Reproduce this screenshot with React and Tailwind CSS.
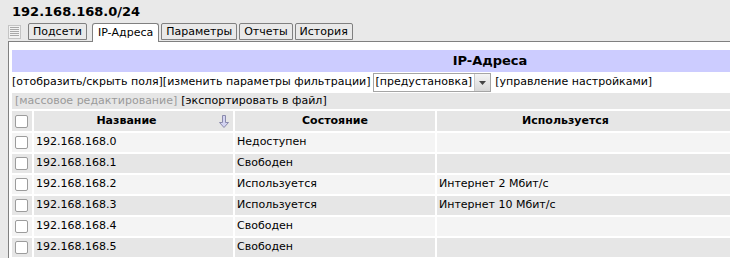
import React from 'react'

const rows = [
    ['192.168.168.0', 'Недоступен', ''],
    ['192.168.168.1', 'Свободен', ''],
    ['192.168.168.2', 'Используется', 'Интернет 2 Мбит/с'],
    ['192.168.168.3', 'Используется', 'Интернет 10 Мбит/с'],
    ['192.168.168.4', 'Свободен', ''],
    ['192.168.168.5', 'Свободен', ''],
]

function Tab({ label, active }) {
    if (active) {
        return (
            <div className="relative z-10 -mb-px h-[19px] px-[5px] bg-white border border-b-0 border-[#808080] rounded-t-[3px] leading-[17px]">
                {label}
            </div>
        )
    }
    return (
        <div className="mb-px h-[17px] px-[4px] bg-[#e9e9e9] border border-[#808080] rounded-t-[2px] leading-[15px]">
            {label}
        </div>
    )
}

function Checkbox() {
    return <span className="block ml-[3px] w-[13px] h-[13px] bg-white border border-[#9c9c9c] rounded-[2px]" />
}

function MenuIcon() {
    return (
        <svg width="13" height="14" viewBox="0 0 13 14" className="mb-[2px] mr-[5px]">
            <rect x="0.5" y="0.5" width="12" height="13" fill="#f2f2f2" stroke="#c4c4c4" />
            {[2.5, 4.5, 6.5, 8.5, 10.5].map(y => (
                <line key={y} x1="2" x2="11" y1={y} y2={y} stroke="#a8a8a8" />
            ))}
        </svg>
    )
}

function SortArrow() {
    return (
        <svg width="10" height="13" viewBox="0 0 10 13">
            <path d="M3.5 0.5 H6.5 V7.5 H9.5 L5 12.5 L0.5 7.5 H3.5 Z" fill="#d4d4f2" stroke="#8a8aac" />
        </svg>
    )
}

export default function App() {
    return (
        <div className="w-[730px] h-[258px] overflow-hidden bg-[#e9e9e9] text-black text-[11px] font-['DejaVu_Sans',Verdana,sans-serif]">
            {/* titre */}
            <div className="h-[22px] pl-3 pt-[4px] text-[13px] font-bold leading-[16px]">192.168.168.0/24</div>

            {/* onglets */}
            <div className="flex items-end h-[19px] pl-2 gap-[2px]">
                <MenuIcon />
                <Tab label="Подсети" />
                <div className="w-px" />
                <Tab label="IP-Адреса" active />
                <Tab label="Параметры" />
                <Tab label="Отчеты" />
                <Tab label="История" />
            </div>

            {/* contenu */}
            <div className="ml-2 h-[217px] pt-[8px] bg-white border-l border-t border-[#808080] w-[1000px]">
                <div className="ml-[3px] w-[956px] h-[22px] flex items-center justify-center bg-[#ccccff] font-bold text-[13px]">
                    IP-Адреса
                </div>

                <div className="ml-[3px] h-[21px] flex items-center whitespace-nowrap">
                    <span>[отобразить/скрыть поля][изменить параметры фильтрации]</span>
                    <span className="ml-[2px] flex items-center h-[19px] border border-[#a5a5a5] bg-white">
                        <span className="px-[2px]">[предустановка]</span>
                        <span className="flex items-center justify-center w-[16px] h-full border-l border-[#c8c8c8] bg-gradient-to-b from-[#f4f4f4] to-[#d8d8d8]">
                            <svg width="7" height="4" viewBox="0 0 7 4">
                                <path d="M0 0 H7 L3.5 4 Z" fill="#444" />
                            </svg>
                        </span>
                    </span>
                    <span className="ml-[4px]">[управление настройками]</span>
                </div>

                <div className="ml-[3px] w-[956px] h-[16px] flex items-center pl-[3px] bg-[#e6e6e6] whitespace-nowrap">
                    <span className="text-[#9a9a9a]">[массовое редактирование]</span>
                    <span className="ml-[4px]">[экспортировать в файл]</span>
                </div>

                <table className="ml-px w-[960px] table-fixed border-separate border-spacing-[2px]">
                    <colgroup>
                        <col className="w-[20px]" />
                        <col className="w-[199px]" />
                        <col className="w-[200px]" />
                        <col />
                    </colgroup>
                    <thead>
                        <tr className="h-[20px] font-bold">
                            <th className="p-0 bg-[#e6e6e6]"><Checkbox /></th>
                            <th className="p-0 bg-[#e6e6e6]">
                                <div className="flex items-center">
                                    <span className="flex-1 text-center">Название</span>
                                    <span className="w-[14px] flex"><SortArrow /></span>
                                </div>
                            </th>
                            <th className="p-0 bg-[#e6e6e6] text-center">Состояние</th>
                            <th className="p-0 pl-[85px] bg-[#e6e6e6] text-left">Используется</th>
                        </tr>
                    </thead>
                    <tbody>
                        {rows.map((r, i) => {
                            const bg = i % 2 === 0 ? 'bg-[#f4f4f4]' : 'bg-[#e6e6e6]'
                            return (
                                <tr key={r[0]} className="h-[19px]">
                                    <td className={`p-0 ${bg}`}><Checkbox /></td>
                                    <td className={`p-0 pl-[2px] ${bg}`}>{r[0]}</td>
                                    <td className={`p-0 pl-[2px] ${bg}`}>{r[1]}</td>
                                    <td className={`p-0 pl-[2px] ${bg}`}>{r[2]}</td>
                                </tr>
                            )
                        })}
                    </tbody>
                </table>
            </div>
        </div>
    )
}
